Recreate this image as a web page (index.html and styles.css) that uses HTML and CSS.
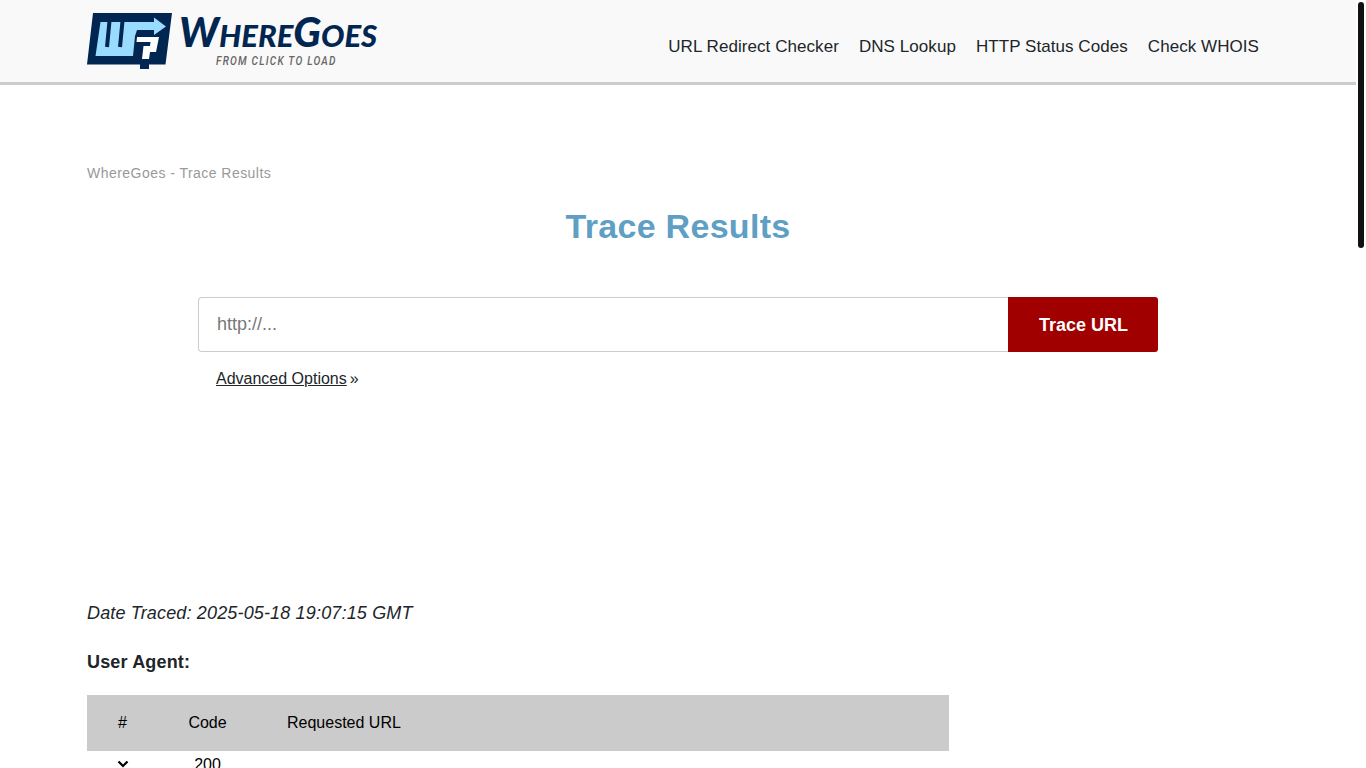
FILE: index.html
```html
<!DOCTYPE html>
<html lang="en">
<head>
<meta charset="utf-8">
<title>WhereGoes - Trace Results</title>
<link rel="stylesheet" href="styles.css">
</head>
<body>
<div class="page">
  <header class="site-header">
    <div class="container header-row">
      <a class="logo" href="#">
        <svg class="logo-mark" width="85" height="56" viewBox="0 0 85 56" aria-hidden="true">
          <path fill="#002651" d="M6 0H85L78.500 51.500H62V56H53V51.500H0Z"/>
          <path fill="#99dcff" d="M13.500 9H67V4.500L79 13.500L67 22V17H50L48 23L46 43H8.500Z"/>
          <path fill="none" stroke="#002651" stroke-width="4" d="M22.500 8L20 34M35.500 8L33 34"/>
          <path fill="#fff" d="M50 24H72L69 39H63L62 46H55L56.500 33H63L63.500 29H49.500Z"/>
        </svg>
        <span class="logo-words">
          <span class="logo-name"><span class="cap">W</span>HERE<span class="cap">G</span>OES</span>
          <span class="logo-tag">FROM CLICK TO LOAD</span>
        </span>
      </a>
      <nav class="main-nav">
        <a href="#">URL Redirect Checker</a>
        <a href="#">DNS Lookup</a>
        <a href="#">HTTP Status Codes</a>
        <a href="#">Check WHOIS</a>
      </nav>
    </div>
  </header>
  <main class="container content">
    <p class="crumb">WhereGoes - Trace Results</p>
    <h1 class="title">Trace Results</h1>
    <form class="trace-form">
      <div class="field-row">
        <input class="url-input" type="text" placeholder="http://...">
        <button class="trace-btn" type="button">Trace URL</button>
      </div>
      <p class="advanced"><a href="#">Advanced Options</a><span class="quote">»</span></p>
    </form>
    <p class="traced">Date Traced: 2025-05-18 19:07:15 GMT</p>
    <p class="agent">User Agent:</p>
    <table class="results">
      <thead>
        <tr><th class="col-num">#</th><th class="col-code">Code</th><th class="col-url">Requested URL</th></tr>
      </thead>
      <tbody>
        <tr>
          <td class="col-num">
            <svg class="chevron" width="12" height="8" viewBox="0 0 12 8" aria-hidden="true"><path d="M1.500 1.500L6 6L10.500 1.500" fill="none" stroke="#000" stroke-width="2.200"/></svg>
          </td>
          <td class="col-code">200</td>
          <td class="col-url"></td>
        </tr>
      </tbody>
    </table>
  </main>
</div>
<div class="scroll-thumb"></div>
</body>
</html>
```

FILE: styles.css
```css
* { box-sizing: border-box; }
html, body { height: 100%; }
body {
  margin: 0;
  overflow: hidden;
  background: #fff;
  color: #212529;
  font-family: "Liberation Sans", Arial, sans-serif;
}
.page { width: 1356px; }
.container { width: 1182px; margin: 0 auto; }
.site-header {
  height: 85px;
  background: #f9f9f9;
  border-bottom: 3px solid #ccc;
}
.header-row { display: flex; justify-content: space-between; height: 100%; }
.logo { display: flex; gap: 7px; padding-top: 13px; text-decoration: none; }
.logo-mark { flex: none; }
.logo-words { display: flex; flex-direction: column; }
.logo-name {
  margin-top: 1px;
  font-family: Lato, sans-serif;
  font-style: italic;
  font-weight: 900;
  font-size: 31px;
  line-height: 36px;
  color: #002651;
  white-space: nowrap;
}
.cap { font-size: 41px; line-height: 36px; }
.logo-tag {
  align-self: flex-start;
  margin: 1px 0 0 37px;
  font-family: Roboto, sans-serif;
  font-style: italic;
  font-weight: 500;
  font-size: 12px;
  line-height: 14px;
  letter-spacing: 1.45px;
  color: #666;
  white-space: nowrap;
  transform: scaleX(0.845);
  transform-origin: left center;
}
.main-nav { display: flex; align-items: center; padding: 11px 10px 0 0; }
.main-nav a {
  margin-left: 20px;
  font-size: 17px;
  letter-spacing: 0.06px;
  color: #212529;
  text-decoration: none;
  white-space: nowrap;
}
.crumb {
  margin: 79px 0 0;
  font-size: 14px;
  line-height: 18px;
  letter-spacing: 0.46px;
  color: #999;
}
.title {
  margin: 23px 0 0;
  font-size: 34px;
  line-height: 42px;
  letter-spacing: 0.3px;
  font-weight: 700;
  text-align: center;
  color: #609fc4;
}
.trace-form { width: 960px; margin: 50px auto 0; }
.field-row { display: flex; height: 55px; }
.url-input {
  flex: 1;
  min-width: 0;
  padding: 0 18px;
  border: 1px solid #ccc;
  border-right: 0;
  border-radius: 4px 0 0 4px;
  font: 18px "Liberation Sans", Arial, sans-serif;
  color: #212529;
  outline: none;
}
.url-input::placeholder { color: #777; opacity: 1; }
.trace-btn {
  width: 150px;
  padding: 1px 0 0 1px;
  border: 0;
  border-radius: 0 3px 3px 0;
  background: #a00000;
  color: #fff;
  font: 700 18px "Liberation Sans", Arial, sans-serif;
}
.advanced {
  margin: 17px 0 0 18px;
  font-size: 16px;
  line-height: 20px;
  color: #212529;
}
.advanced a { color: #212529; text-decoration: underline; }
.quote { margin-left: 3px; }
.traced {
  margin: 213px 0 0;
  font-size: 18px;
  line-height: 22px;
  font-style: italic;
  letter-spacing: 0.16px;
  color: #212529;
}
.agent {
  margin: 27px 0 0;
  font-size: 18px;
  line-height: 22px;
  font-weight: 700;
  letter-spacing: 0.16px;
  color: #212529;
}
.results {
  width: 862px;
  margin-top: 22px;
  border-collapse: collapse;
  font-size: 16px;
  color: #000;
}
.results th {
  height: 56px;
  padding: 0;
  background: #cbcbcb;
  font-weight: 400;
  text-align: center;
}
.results td { height: 26px; padding: 5px 0 0; text-align: center; vertical-align: top; line-height: 18px; }
.col-num { width: 71px; }
.col-code { width: 99px; }
.results .col-url { padding-left: 30px; text-align: left; }
.chevron { display: block; margin: 4px auto 0; }
.scroll-thumb {
  position: fixed;
  top: 2px;
  right: 2px;
  width: 6px;
  height: 246px;
  border-radius: 3px;
  background: #111;
}
```
